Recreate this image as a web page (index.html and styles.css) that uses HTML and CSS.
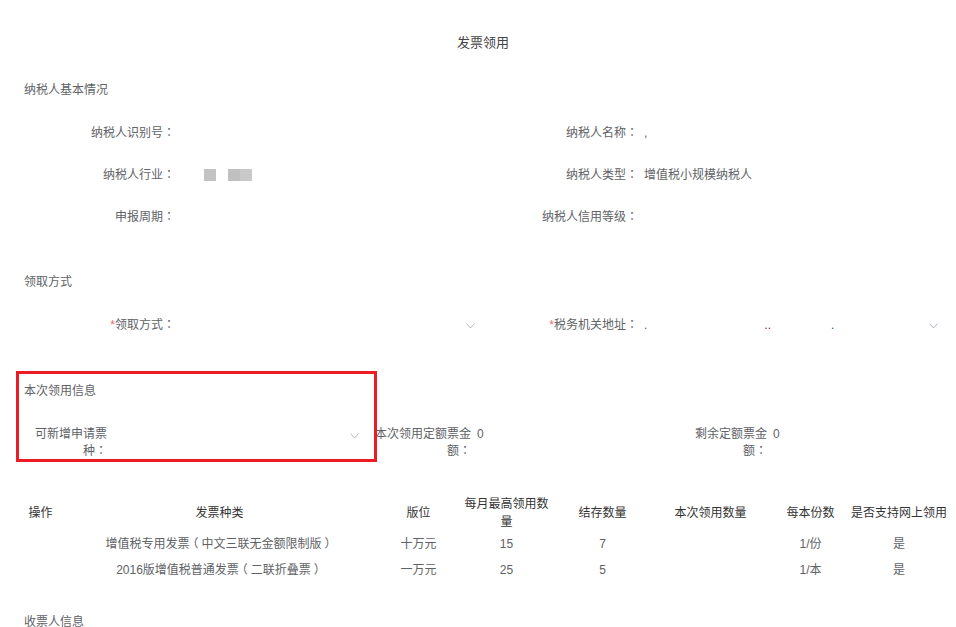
FILE: index.html
```html
<!DOCTYPE html>
<html lang="zh-CN">
<head>
<meta charset="utf-8">
<title>发票领用</title>
<link rel="stylesheet" href="styles.css">
</head>
<body>
<div class="page">
  <h1 class="title">发票领用</h1>

  <div class="sec-head first">纳税人基本情况</div>
  <div class="form-grid">
    <div class="item"><span class="label">纳税人识别号<span class="p">：</span></span><span class="value"></span></div>
    <div class="item"><span class="label">纳税人名称<span class="p">：</span></span><span class="value">,</span></div>
    <div class="item"><span class="label">纳税人行业<span class="p">：</span></span><span class="value"><i class="mask m1"></i><i class="mask m2"></i></span></div>
    <div class="item"><span class="label">纳税人类型<span class="p">：</span></span><span class="value">增值税小规模纳税人</span></div>
    <div class="item"><span class="label">申报周期<span class="p">：</span></span><span class="value"></span></div>
    <div class="item"><span class="label">纳税人信用等级<span class="p">：</span></span><span class="value"></span></div>
  </div>

  <div class="sec-head gap">领取方式</div>
  <div class="form-grid">
    <div class="item">
      <span class="label"><em class="req">*</em>领取方式<span class="p">：</span></span>
      <div class="select"><span class="sel-val"></span>
        <svg class="arrow" width="9" height="6" viewBox="0 0 9 6"><path d="M0.5 0.5 L4.5 5 L8.5 0.5" fill="none" stroke="#b4b8c2" stroke-width="1"/></svg>
      </div>
    </div>
    <div class="item">
      <span class="label"><em class="req">*</em>税务机关地址<span class="p">：</span></span>
      <div class="select"><span class="sel-val"><span class="dot">.</span><span class="dot d2">..</span><span class="dot d3">.</span></span>
        <svg class="arrow" width="9" height="6" viewBox="0 0 9 6"><path d="M0.5 0.5 L4.5 5 L8.5 0.5" fill="none" stroke="#b4b8c2" stroke-width="1"/></svg>
      </div>
    </div>
  </div>

  <div class="sec-head gap2">本次领用信息</div>
  <div class="info-row">
    <div class="col c1">
      <span class="wlabel w80">可新增申请票种<span class="p">：</span></span>
      <div class="select small"><span class="sel-val"></span>
        <svg class="arrow" width="9" height="6" viewBox="0 0 9 6"><path d="M0.5 0.5 L4.5 5 L8.5 0.5" fill="none" stroke="#b4b8c2" stroke-width="1"/></svg>
      </div>
    </div>
    <div class="col c2">
      <span class="wlabel w106">本次领用定额票金额<span class="p">：</span></span>
      <span class="wvalue">0</span>
    </div>
    <div class="col c3">
      <span class="wlabel w80">剩余定额票金额<span class="p">：</span></span>
      <span class="wvalue">0</span>
    </div>
  </div>

  <table class="grid">
    <colgroup>
      <col class="k1"><col class="k2"><col class="k3"><col class="k4">
      <col class="k5"><col class="k6"><col class="k7"><col class="k8">
    </colgroup>
    <thead>
      <tr>
        <th>操作</th><th>发票种类</th><th>版位</th><th>每月最高领用数量</th>
        <th>结存数量</th><th>本次领用数量</th><th>每本份数</th><th class="nowrap">是否支持网上领用</th>
      </tr>
    </thead>
    <tbody>
      <tr>
        <td></td><td>增值税专用发票<span class="p po">（</span>中文三联无金额限制版<span class="p pc">）</span></td><td>十万元</td><td>15</td>
        <td>7</td><td></td><td>1/份</td><td>是</td>
      </tr>
      <tr>
        <td></td><td>2016版增值税普通发票<span class="p po">（</span>二联折叠票<span class="p pc">）</span></td><td>一万元</td><td>25</td>
        <td>5</td><td></td><td>1/本</td><td>是</td>
      </tr>
    </tbody>
  </table>

  <div class="sec-head last">收票人信息</div>

  <div class="annot"></div>
</div>
</body>
</html>
```
FILE: styles.css
```css
html, body {
  margin: 0;
  padding: 0;
  background: #ffffff;
}
body {
  font-family: "Liberation Sans", "Noto Sans CJK SC", sans-serif;
  font-size: 12px;
  color: #606266;
}
.p {
  font-family: "Noto Sans CJK TC", "Noto Sans CJK SC", sans-serif;
  font-feature-settings: "locl" 0;
  line-height: 1;
}
.po, .pc { position: relative; }
.po { left: -3px; }
.pc { left: 3px; }
.page {
  position: relative;
  padding: 33px 0 0 15px;
  width: 926px;
}
.title {
  margin: 0;
  padding-left: 10px;
  font-size: 13px;
  font-weight: normal;
  line-height: 20px;
  text-align: center;
  color: #444;
}
.sec-head {
  margin: 26px 0 12px 9px;
  line-height: 20px;
  color: #606266;
}
.sec-head.first { margin-top: 27px; }
.sec-head.gap { margin-top: 34px; }
.sec-head.gap2 { margin-top: 35px; }
.sec-head.last { margin-top: 29px; }

.form-grid {
  display: grid;
  grid-template-columns: 463px 463px;
}
.item {
  display: flex;
  align-items: center;
  height: 42px;
  line-height: 18px;
}
.label {
  flex: none;
  width: 160px;
  text-align: right;
  white-space: nowrap;
}
.req {
  font-style: normal;
  color: #f56c6c;
}
.value {
  padding-left: 6px;
  display: flex;
  align-items: center;
}
.mask {
  display: inline-block;
  height: 12px;
  background: #c3c3c3;
}
.mask.m1 { width: 12px; margin-left: 23px; }
.mask.m2 { width: 24px; margin-left: 12px; background: linear-gradient(90deg, #c0c0c0 50%, #c9c9c9 50%); }

.select {
  flex: 1;
  display: flex;
  align-items: center;
  justify-content: space-between;
  padding: 0 3px 0 6px;
  height: 18px;
}
.select .arrow { flex: none; margin-top: 2px; }
.sel-val { display: flex; }
.dot { color: #606266; }
.dot.d2 { margin-left: 117px; color: #7a2b2b; }
.dot.d3 { margin-left: 60px; color: #2b4a7a; }

.info-row {
  display: flex;
  padding-top: 13px;
  line-height: 17px;
}
.col { display: flex; align-items: flex-start; }
.col.c1 { width: 350px; }
.col.c2 { width: 322px; }
.col.c3 { flex: 1; }
.wlabel { flex: none; text-align: right; }
.w80 { width: 80px; }
.w106 { width: 106px; }
.c1 .wlabel { margin-left: 12px; }
.wvalue { padding-left: 6px; }
.select.small {
  height: 17px;
  padding-right: 6px;
}

.grid {
  margin: 35px 0 0 5px;
  border-collapse: collapse;
  table-layout: fixed;
  width: 927px;
}
.k1 { width: 41px; }
.k2 { width: 317px; }
.k3 { width: 81px; }
.k4 { width: 95px; }
.k5 { width: 97px; }
.k6 { width: 119px; }
.k7 { width: 81px; }
.k8 { width: 96px; }
.grid th, .grid td {
  padding: 0;
  text-align: center;
  vertical-align: middle;
}
.grid th {
  height: 36px;
  line-height: 18px;
  font-weight: normal;
  color: #333;
}
.grid th.nowrap { white-space: nowrap; }
.grid td {
  height: 26px;
  line-height: 18px;
  color: #606266;
  white-space: nowrap;
}

.annot {
  position: absolute;
  left: 16px;
  top: 371px;
  width: 355px;
  height: 85px;
  border: 3px solid #ed1c24;
}
```
